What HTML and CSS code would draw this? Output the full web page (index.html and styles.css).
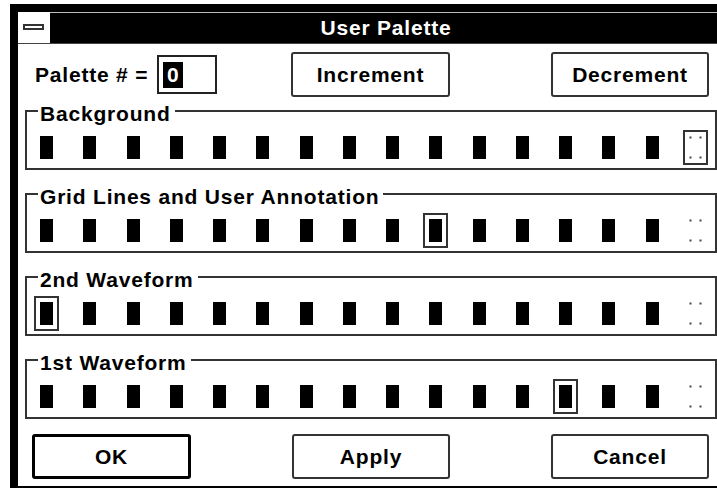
FILE: index.html
```html
<!DOCTYPE html>
<html>
<head>
<meta charset="utf-8">
<link rel="stylesheet" href="styles.css">
</head>
<body>
<div class="window">
  <div class="titlebar">
    <div class="sysmenu"><span class="sysbar"></span></div>
    <div class="title">User Palette</div>
  </div>
  <div class="client">
    <div class="toprow">
      <div class="palette-field"><span class="label">Palette # =</span><span class="entry"><span class="sel">0</span></span></div>
      <button class="btn inc">Increment</button>
      <button class="btn dec">Decrement</button>
    </div>

    <fieldset class="group first">
      <legend>Background</legend>
      <div class="swatches">
        <span class="sw"></span><span class="sw"></span><span class="sw"></span><span class="sw"></span>
        <span class="sw"></span><span class="sw"></span><span class="sw"></span><span class="sw"></span>
        <span class="sw"></span><span class="sw"></span><span class="sw"></span><span class="sw"></span>
        <span class="sw"></span><span class="sw"></span><span class="sw"></span><span class="sw white picked"></span>
      </div>
    </fieldset>

    <fieldset class="group">
      <legend>Grid Lines and User Annotation</legend>
      <div class="swatches">
        <span class="sw"></span><span class="sw"></span><span class="sw"></span><span class="sw"></span>
        <span class="sw"></span><span class="sw"></span><span class="sw"></span><span class="sw"></span>
        <span class="sw"></span><span class="sw picked"></span><span class="sw"></span><span class="sw"></span>
        <span class="sw"></span><span class="sw"></span><span class="sw"></span><span class="sw white"></span>
      </div>
    </fieldset>

    <fieldset class="group">
      <legend>2nd Waveform</legend>
      <div class="swatches">
        <span class="sw picked"></span><span class="sw"></span><span class="sw"></span><span class="sw"></span>
        <span class="sw"></span><span class="sw"></span><span class="sw"></span><span class="sw"></span>
        <span class="sw"></span><span class="sw"></span><span class="sw"></span><span class="sw"></span>
        <span class="sw"></span><span class="sw"></span><span class="sw"></span><span class="sw white"></span>
      </div>
    </fieldset>

    <fieldset class="group">
      <legend>1st Waveform</legend>
      <div class="swatches">
        <span class="sw"></span><span class="sw"></span><span class="sw"></span><span class="sw"></span>
        <span class="sw"></span><span class="sw"></span><span class="sw"></span><span class="sw"></span>
        <span class="sw"></span><span class="sw"></span><span class="sw"></span><span class="sw"></span>
        <span class="sw picked"></span><span class="sw"></span><span class="sw"></span><span class="sw white"></span>
      </div>
    </fieldset>

    <div class="bottomrow">
      <button class="btn default">OK</button>
      <button class="btn">Apply</button>
      <button class="btn">Cancel</button>
    </div>
  </div>
</div>
</body>
</html>
```

FILE: styles.css
```css
html, body {
  margin: 0;
  padding: 0;
  background: #fff;
  overflow: hidden;
}

body {
  width: 717px;
  height: 488px;
  font-family: "Liberation Sans", Arial, sans-serif;
  font-weight: bold;
  font-size: 21px;
  letter-spacing: 0.8px;
  color: #000;
}

.window {
  margin: 4px 0 0 10px;
  width: 704px;
  border: 8px solid #000;
}

.titlebar {
  display: flex;
  height: 31px;
  border-bottom: 1px solid #444;
}

.sysmenu {
  width: 32px;
  background: #fff;
  display: flex;
  align-items: center;
  justify-content: center;
}

.sysbar {
  display: block;
  width: 21px;
  height: 6px;
  box-sizing: border-box;
  border: 2px solid #333;
  background: #fff;
  margin-top: -2px;
  margin-left: -2px;
}

.title {
  flex: 1;
  background: #000;
  color: #fff;
  text-align: center;
  line-height: 31px;
  box-shadow: inset 0 1px 0 #bbb;
}

.client {
  display: flex;
  flex-direction: column;
  padding: 8px 5px 7px 7px;
}

.toprow {
  display: flex;
  align-items: center;
  height: 45px;
  padding-left: 10px;
}

.palette-field {
  width: 182px;
  display: flex;
  align-items: center;
  justify-content: space-between;
}

.entry {
  width: 60px;
  height: 39px;
  box-sizing: border-box;
  border: 2px solid #222;
  padding-left: 4px;
  display: flex;
  align-items: center;
}

.sel {
  background: #000;
  color: #fff;
  line-height: 26px;
  padding: 0 4px;
  letter-spacing: 0;
}

.btn {
  font: inherit;
  letter-spacing: inherit;
  color: #000;
  background: #fff;
  border: 2px solid #333;
  border-radius: 3px;
  height: 45px;
  width: 158px;
  padding: 0;
  box-sizing: border-box;
}

.inc {
  width: 159px;
  margin-left: 74px;
}

.dec {
  margin-left: 101px;
}

.default {
  width: 159px;
  border: 3px solid #000;
}

.group {
  margin: 11px 0 0 0;
  border: 2px solid #333;
  padding: 12px 13px 9px;
  min-width: 0;
}

.group.first {
  margin-top: 1px;
}

.group legend {
  padding: 6px 4px 0 2px;
  margin-left: -2px;
  line-height: 20px;
}

.swatches {
  display: flex;
  justify-content: space-between;
}

.sw {
  display: block;
  width: 13px;
  height: 23px;
  background: #000;
}

.sw.white {
  background-color: #fff;
  background-image: radial-gradient(circle, #444 0, #444 0.8px, transparent 1.3px);
  background-size: 10px 20px;
  background-position: -3.5px -8.5px;
}

.sw.picked {
  outline: 2px solid #333;
  outline-offset: 4px;
}

.bottomrow {
  display: flex;
  gap: 101px;
  margin-top: 15px;
  padding-left: 7px;
}
```
